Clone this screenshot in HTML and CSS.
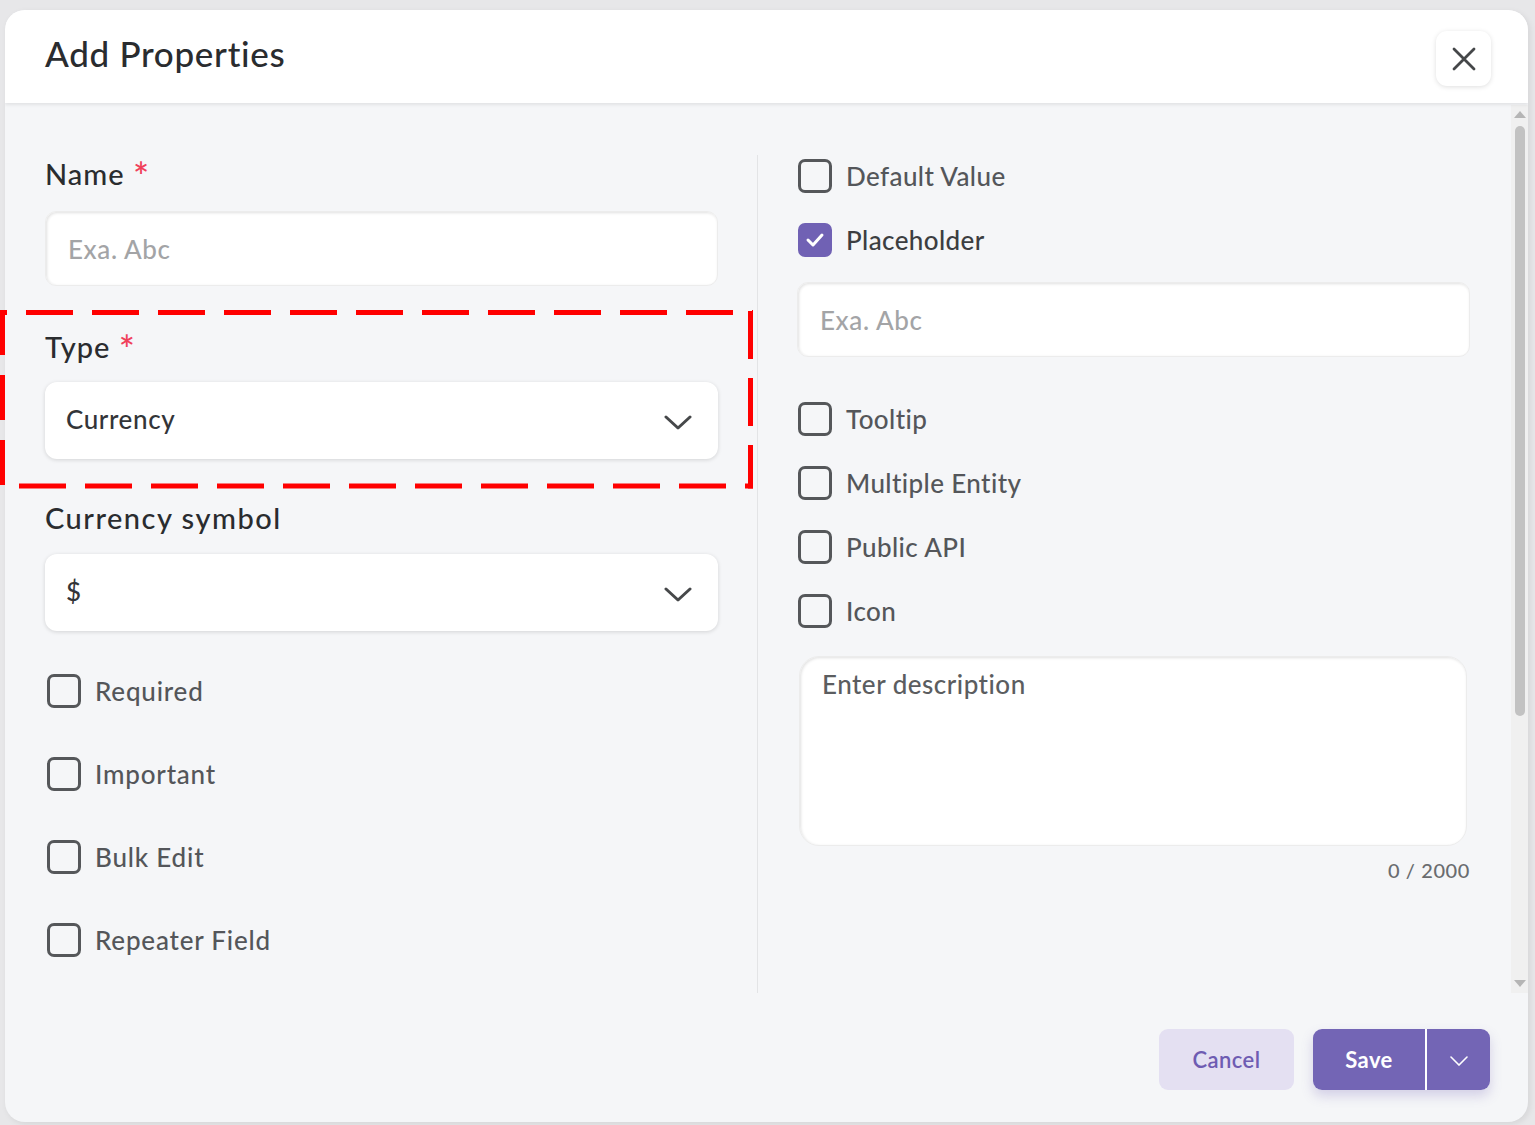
FILE: index.html
```html
<!DOCTYPE html>
<html>
<head>
<meta charset="utf-8">
<link rel="stylesheet" href="styles.css">
</head>
<body>
<div class="modal">
  <header class="modal-header">
    <h1 class="title">Add Properties</h1>
    <button class="close-btn" aria-label="Close">
      <svg width="26" height="26" viewBox="0 0 26 26"><path d="M3 3 L23 23 M23 3 L3 23" stroke="#454749" stroke-width="2.8" stroke-linecap="round" fill="none"/></svg>
    </button>
  </header>
  <div class="modal-body">
    <div class="col col-left">
      <label class="field-label">Name <span class="req">*</span></label>
      <div class="input input-name"><span class="placeholder">Exa. Abc</span></div>

      <label class="field-label label-type">Type <span class="req">*</span></label>
      <div class="select select-type"><span class="value">Currency</span>
        <svg class="chev" width="28" height="16" viewBox="0 0 28 16"><path d="M2 2 L14 13 L26 2" stroke="#46484a" stroke-width="3" fill="none" stroke-linecap="round" stroke-linejoin="round"/></svg>
      </div>

      <label class="field-label label-currency">Currency symbol</label>
      <div class="select select-currency"><span class="value">$</span>
        <svg class="chev" width="28" height="16" viewBox="0 0 28 16"><path d="M2 2 L14 13 L26 2" stroke="#46484a" stroke-width="3" fill="none" stroke-linecap="round" stroke-linejoin="round"/></svg>
      </div>

      <div class="checks-left">
        <div class="check"><span class="box"></span><span class="check-label">Required</span></div>
        <div class="check"><span class="box"></span><span class="check-label">Important</span></div>
        <div class="check"><span class="box"></span><span class="check-label">Bulk Edit</span></div>
        <div class="check"><span class="box"></span><span class="check-label">Repeater Field</span></div>
      </div>
    </div>
    <div class="divider"></div>
    <div class="col col-right">
      <div class="check"><span class="box"></span><span class="check-label">Default Value</span></div>
      <div class="check check-placeholder"><span class="box box-checked">
        <svg width="20" height="16" viewBox="0 0 20 16"><path d="M3 8 L8 13 L17 3" stroke="#fff" stroke-width="3" fill="none" stroke-linecap="round" stroke-linejoin="round"/></svg>
      </span><span class="check-label">Placeholder</span></div>
      <div class="input input-placeholder"><span class="placeholder">Exa. Abc</span></div>
      <div class="check check-tooltip"><span class="box"></span><span class="check-label">Tooltip</span></div>
      <div class="check check-r"><span class="box"></span><span class="check-label">Multiple Entity</span></div>
      <div class="check check-r"><span class="box"></span><span class="check-label">Public API</span></div>
      <div class="check check-r"><span class="box"></span><span class="check-label">Icon</span></div>
      <div class="textarea"><span class="placeholder-dark">Enter description</span></div>
      <div class="counter">0 / 2000</div>
    </div>
    <div class="scrollbar">
      <span class="arrow arrow-up"></span>
      <span class="thumb"></span>
      <span class="arrow arrow-down"></span>
    </div>
  </div>
  <footer class="modal-footer">
    <button class="btn btn-cancel">Cancel</button>
    <div class="btn-group">
      <button class="btn btn-save">Save</button>
      <button class="btn btn-drop">
        <svg width="18" height="10" viewBox="0 0 18 10"><path d="M1 1 L9 9 L17 1" stroke="#fff" stroke-width="1.6" fill="none" stroke-linecap="round"/></svg>
      </button>
    </div>
  </footer>
</div>
<svg class="highlight" width="756" height="182" viewBox="0 0 756 182">
  <line x1="0" y1="2.5" x2="753" y2="2.5" stroke="#ff0000" stroke-width="5" stroke-dasharray="47 19" stroke-dashoffset="40"/>
  <line x1="2.5" y1="0" x2="2.5" y2="178" stroke="#ff0000" stroke-width="5" stroke-dasharray="45 20"/>
  <line x1="0" y1="176" x2="753" y2="176" stroke="#ff0000" stroke-width="5" stroke-dasharray="47 19" stroke-dashoffset="47"/>
  <line x1="750.5" y1="0" x2="750.5" y2="178.5" stroke="#ff0000" stroke-width="5" stroke-dasharray="48 19" stroke-dashoffset="66"/>
</svg>
</body>
</html>
```

FILE: styles.css
```css
* { box-sizing: border-box; }
html, body { margin: 0; padding: 0; }
body {
  background: #e7e7e9;
  font-family: "Lato", "Liberation Sans", sans-serif;
  width: 1535px;
  height: 1125px;
  overflow: hidden;
  position: relative;
  padding: 10px 0 0 5px;
}
.modal {
  width: 1523px;
  height: 1112px;
  background: #f5f6f8;
  border-radius: 20px;
  overflow: hidden;
  display: flex;
  flex-direction: column;
  box-shadow: 2px 2px 6px rgba(0,0,0,0.08);
}
.modal-header {
  height: 93px;
  background: #fff;
  display: flex;
  align-items: center;
  justify-content: space-between;
  padding: 0 37px 0 40px;
  box-shadow: 0 2px 3px rgba(0,0,0,0.08);
  position: relative;
  z-index: 1;
  flex-shrink: 0;
}
.title {
  margin: 0;
  font-size: 35px;
  font-weight: 500;
  color: #2a2c2f;
  position: relative;
  top: -4px;
  letter-spacing: 0.7px;
}
.close-btn {
  width: 55px;
  height: 55px;
  border: none;
  background: #fff;
  border-radius: 11px;
  box-shadow: 0 1px 5px rgba(0,0,0,0.13);
  display: flex;
  align-items: center;
  justify-content: center;
  padding: 0;
  margin-top: 4px;
}
.modal-body {
  height: 890px;
  display: flex;
  flex-shrink: 0;
  padding-top: 2px;
}
.col {
  width: 673px;
  display: flex;
  flex-direction: column;
  padding-top: 51px;
}
.col-left { margin-left: 40px; }
.divider {
  width: 1px;
  background: #e3e4e6;
  margin: 50px 39px 0 39px;
}
.field-label {
  font-size: 29px;
  font-weight: 500;
  color: #2a2c2f;
  line-height: 36px;
  height: 36px;
  letter-spacing: 1px;
}
.label-currency { letter-spacing: 1.5px; }
.req {
  color: #f0405a;
  font-size: 38px;
  position: relative;
  top: 6px;
  line-height: 0;
  letter-spacing: 0;
}
.input {
  height: 75px;
  background: #fff;
  border-radius: 11px;
  box-shadow: inset 1px 1px 3px rgba(0,0,0,0.12);
  border: 1px solid #ececec;
  display: flex;
  align-items: center;
  padding-left: 22px;
}
.input-name { margin-top: 19px; }
.placeholder { font-size: 26px; color: #a3a4a6; font-weight: 500; letter-spacing: 0.6px; }
.placeholder-dark { font-size: 26px; color: #5b5d60; font-weight: 500; letter-spacing: 0.5px; }
.label-type { margin-top: 43px; }
.select {
  height: 77px;
  background: #fff;
  border-radius: 12px;
  box-shadow: 0 1px 4px rgba(0,0,0,0.14);
  display: flex;
  align-items: center;
  justify-content: space-between;
  padding: 0 26px 4px 21px;
}
.select .value { font-size: 26px; color: #333538; font-weight: 500; letter-spacing: 0.6px; }
.select .chev { margin-top: 8px; }
.select-type { margin-top: 17px; }
.label-currency { margin-top: 41px; }
.select-currency { margin-top: 18px; }
.checks-left {
  display: flex;
  flex-direction: column;
  gap: 43px;
  margin-top: 40px;
  padding-left: 2px;
}
.check {
  height: 40px;
  display: flex;
  align-items: center;
}
.box {
  width: 34px;
  height: 34px;
  border: 3px solid #55575a;
  border-radius: 7px;
  display: flex;
  align-items: center;
  justify-content: center;
  flex-shrink: 0;
}
.box-checked {
  background: #7061b4;
  border-color: #7061b4;
}
.check-label {
  font-size: 26px;
  color: #54565a;
  font-weight: 500;
  margin-left: 14px;
  letter-spacing: 0.8px;
}
.col-right .check { padding-left: 1px; }
.col-right .check-label { letter-spacing: 0.4px; }
.check-placeholder { margin-top: 24px; }
.check-placeholder .check-label { color: #3c3e41; }
.input-placeholder { margin-top: 22px; }
.check-tooltip { margin-top: 42px; }
.check-r { margin-top: 24px; }
.textarea {
  margin-top: 25px;
  margin-left: 2px;
  width: 668px;
  height: 190px;
  background: #fff;
  border-radius: 20px;
  box-shadow: inset 1px 1px 3px rgba(0,0,0,0.12);
  border: 1px solid #ececec;
  padding: 11px 0 0 22px;
}
.counter {
  margin-top: 13px;
  text-align: right;
  font-size: 20px;
  color: #6a6c6f;
  font-weight: 500;
  line-height: 22px;
  letter-spacing: 0.6px;
}
.scrollbar {
  width: 17px;
  margin-left: 41px;
  background: #f0f0f0;
  display: flex;
  flex-direction: column;
  align-items: center;
  position: relative;
}
.arrow {
  width: 0; height: 0;
  border-left: 6px solid transparent;
  border-right: 6px solid transparent;
}
.arrow-up { border-bottom: 7px solid #b5b5b5; margin-top: 6px; }
.arrow-down { border-top: 7px solid #b5b5b5; margin-top: auto; margin-bottom: 6px; }
.thumb {
  width: 10px;
  height: 590px;
  background: #c2c2c2;
  border-radius: 5px;
  margin-top: 8px;
}
.modal-footer {
  flex: 1;
  display: flex;
  justify-content: flex-end;
  align-items: flex-start;
  padding: 36px 38px 0 0;
  gap: 19px;
}
.btn {
  border: none;
  font-family: inherit;
  height: 61px;
  border-radius: 9px;
  font-size: 22px;
  font-weight: 700;
  letter-spacing: 0.4px;
}
.btn-cancel {
  width: 135px;
  background: #e4e0f2;
  color: #6e5cb2;
  font-weight: 600;
}
.btn-group {
  display: flex;
  gap: 2px;
  box-shadow: 0 6px 12px rgba(112,97,180,0.25);
  border-radius: 9px;
  background: #fff;
}
.btn-save {
  width: 112px;
  background: #7365b5;
  color: #fff;
  border-radius: 9px 0 0 9px;
}
.btn-drop {
  width: 63px;
  background: #7365b5;
  border-radius: 0 9px 9px 0;
  display: flex;
  align-items: center;
  justify-content: center;
  padding-top: 4px;
}
.highlight {
  position: absolute;
  left: 0;
  top: 310px;
}
```
